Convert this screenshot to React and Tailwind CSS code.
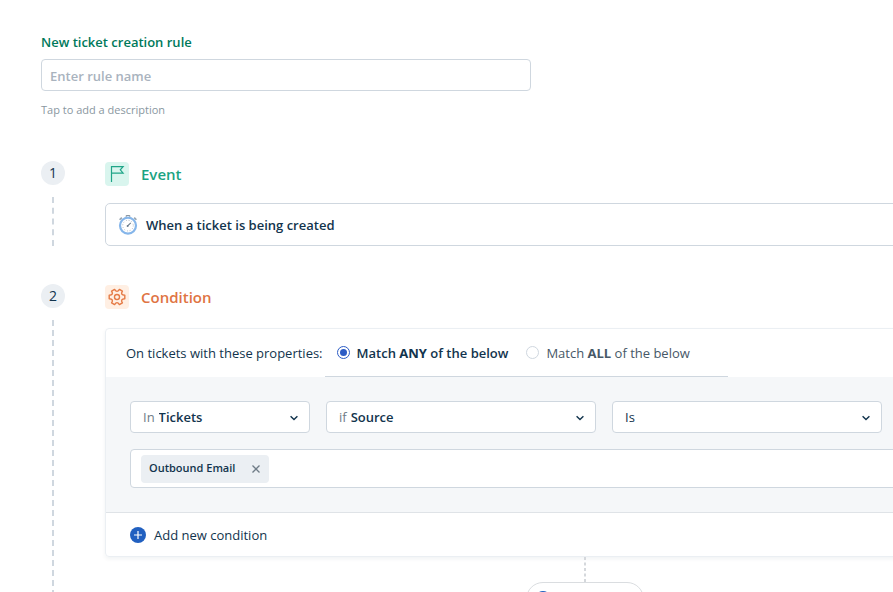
import { useState } from "react";

function Step({ number, title, titleClass, tileClass, icon, children }) {
  return (
    <section className="flex gap-10">
      <div className="flex w-6 shrink-0 flex-col items-center">
        <span className="flex h-6 w-6 items-center justify-center rounded-full bg-[#ebeff3] text-sm text-[#12344d]">
          {number}
        </span>
        <span className="mt-3 flex-1 border-l-2 border-dashed border-[#cfd7df]" />
      </div>
      <div className="min-w-0 flex-1 pt-px">
        <div className="flex h-6 items-center gap-3">
          <span className={`flex h-6 w-6 items-center justify-center rounded ${tileClass}`}>{icon}</span>
          <h2 className={`text-[15px] font-semibold ${titleClass}`}>{title}</h2>
        </div>
        {children}
      </div>
    </section>
  );
}

function FlagIcon() {
  return (
    <svg className="h-6 w-6" viewBox="0 0 24 24" fill="none" stroke="#1fa588" strokeWidth="1.2" aria-hidden="true">
      <path d="M6.5 4v16M6.5 4.6h11.6l-2.8 3.2 2.8 3.3H6.5" />
    </svg>
  );
}

function GearIcon() {
  return (
    <svg className="h-6 w-6" viewBox="-12 -12 24 24" fill="none" stroke="#e57a45" strokeWidth="1.4" strokeLinejoin="round" aria-hidden="true">
      <path d="M7.8-1.7V1.7Q3 1.8 5.4 5.9L2.4 7.6Q0 3.6-2.4 7.6L-5.4 5.9Q-3 1.8-7.8 1.7V-1.7Q-3-1.8-5.4-5.9L-2.4-7.6Q0-3.6 2.4-7.6L5.4-5.9Q3-1.8 7.8-1.7Z" />
      <circle r="2.5" />
    </svg>
  );
}

function StopwatchIcon() {
  return (
    <svg className="h-5 w-5" viewBox="0 0 20 20" fill="none" aria-hidden="true">
      <path d="M8.2.5h3.6v2H8.2z" fill="#fff" stroke="#7d8a96" strokeWidth=".9" />
      <path d="M1.6 4.8 3.8 2.6M18.4 4.8 16.2 2.6" stroke="#98a4af" strokeWidth="1.6" />
      <circle cx="10" cy="10.6" r="8" fill="#fff" stroke="#86b6ea" strokeWidth="2.2" />
      <circle cx="10" cy="10.6" r="5.3" stroke="#9aa6b2" strokeWidth=".9" strokeDasharray=".8 1.98" />
      <path d="M9.4 11.2 12.8 7.8" stroke="#6b7c8c" strokeWidth="1.1" />
      <circle cx="9.6" cy="11" r="1" fill="#6b7c8c" />
    </svg>
  );
}

function PlusIcon() {
  return (
    <svg className="h-4 w-4" viewBox="0 0 16 16" aria-hidden="true">
      <circle cx="8" cy="8" r="8" fill="#2160c0" />
      <path d="M4 8h8M8 4v8" stroke="#fff" strokeWidth="1.2" />
    </svg>
  );
}

function Chevron() {
  return (
    <svg className="pointer-events-none absolute right-2.5 h-2.5 w-2.5" viewBox="0 0 10 10" fill="none" stroke="#12344d" strokeWidth="1.4" aria-hidden="true">
      <path d="M1.6 3.2 5 6.6 8.4 3.2" />
    </svg>
  );
}

function PickList({ id, prefix, label, option, className, selectClass }) {
  return (
    <div className={`relative flex h-8 items-center gap-1 rounded border border-[#cfd7df] bg-white pt-px pl-3 ${className}`}>
      {prefix ? <label htmlFor={id} className="text-[#6f7c87]">{prefix}</label> : null}
      <select
        id={id}
        aria-label={prefix ? undefined : label}
        className={`min-w-0 flex-1 appearance-none bg-transparent text-[#12344d] outline-none ${selectClass}`}
      >
        <option>{option}</option>
      </select>
      <Chevron />
    </div>
  );
}

function MatchOption({ value, current, onChange }) {
  const checked = value === current;

  return (
    <label className={`flex items-center gap-[7px] ${checked ? "font-semibold text-[#12344d]" : "text-[#475867]"}`}>
      <input
        type="radio"
        name="match"
        value={value}
        checked={checked}
        onChange={() => onChange(value)}
        className="h-[13px] w-[13px] appearance-none rounded-full border border-[#cfd7df] bg-white bg-clip-content p-0.5 checked:border-[#2c5cc5] checked:bg-[#2c5cc5]"
      />
      <span className="pt-0.5">
        Match <b className="font-bold">{value}</b> of the below
      </span>
    </label>
  );
}

function App() {
  const [name, setName] = useState("");
  const [match, setMatch] = useState("ANY");
  const [tags, setTags] = useState(["Outbound Email"]);

  return (
    <main className="h-screen overflow-hidden bg-white pt-8 pl-[41px] font-['Open_Sans','Noto_Sans',sans-serif] text-[13px] text-[#12344d]">
      <div className="min-w-[1024px]">
        <header className="w-[490px]">
          <label htmlFor="rule-name" className="block leading-5 font-semibold text-[#00795b]">
            New ticket creation rule
          </label>
          <input
            id="rule-name"
            value={name}
            onChange={(event) => setName(event.target.value)}
            placeholder="Enter rule name"
            className="mt-[7px] block h-8 w-full rounded border border-[#cfd7df] px-2 pt-0.5 font-semibold outline-none placeholder:text-[#a9b3be]"
          />
          <button type="button" className="mt-2.5 block text-[11px] leading-[18px] text-[#8a979f]">
            Tap to add a description
          </button>
        </header>

        <div className="mt-[42px] flex flex-col gap-[38px]">
          <Step number="1" title="Event" titleClass="text-[#1aa382]" tileClass="bg-[#d9f5ee]" icon={<FlagIcon />}>
            <div className="mt-[17px] flex h-[43px] items-center gap-2 rounded-[5px] border border-[#cfd7df] pl-3 font-semibold">
              <StopwatchIcon />
              <span className="pt-0.5">When a ticket is being created</span>
            </div>
          </Step>

          <Step number="2" title="Condition" titleClass="text-[#e07443]" tileClass="bg-[#ffefe3]" icon={<GearIcon />}>
            <div className="mt-[19px] rounded border border-[#ebeff3] shadow-[0_2px_4px_rgba(24,50,71,0.06)]">
              <div className="flex h-12 items-stretch pl-5">
                <span className="flex items-center pt-0.5 pr-0.5">On tickets with these properties:</span>
                <div className="flex items-center gap-[18px] border-b border-[#cfd7df] pr-[38px] pl-3">
                  <MatchOption value="ANY" current={match} onChange={setMatch} />
                  <MatchOption value="ALL" current={match} onChange={setMatch} />
                </div>
              </div>

              <div className="border-b border-[#dfe3e7] bg-[#f5f7f9] p-6">
                <div className="flex gap-4">
                  <PickList id="module" prefix="In" option="Tickets" className="w-[180px]" selectClass="font-semibold" />
                  <PickList id="field" prefix="if" option="Source" className="w-[270px]" selectClass="font-semibold" />
                  <PickList id="operator" label="Operator" option="Is" className="w-[270px]" selectClass="" />
                </div>
                <div className="mt-4 flex h-[39px] items-center gap-2 rounded border border-[#cfd7df] bg-white pl-2.5">
                  {tags.map((tag) => (
                    <span key={tag} className="flex h-7 items-center gap-4 rounded bg-[#ebeff3] px-2 text-[11px] font-semibold">
                      {tag}
                      <button type="button" aria-label={`Remove ${tag}`} onClick={() => setTags(tags.filter((item) => item !== tag))}>
                        <svg className="h-2.5 w-2.5" viewBox="0 0 10 10" stroke="#6f7c87" strokeWidth="1.3" aria-hidden="true">
                          <path d="M1.5 1.5l7 7M8.5 1.5l-7 7" />
                        </svg>
                      </button>
                    </span>
                  ))}
                </div>
              </div>

              <button type="button" className="flex h-[43px] items-center gap-2 pl-6">
                <PlusIcon />
                <span className="pt-0.5">Add new condition</span>
              </button>
            </div>

            <div className="flex flex-col items-center">
              <span className="h-[25px] border-x border-dashed border-[#d5d8dc]" />
              <button
                type="button"
                aria-label="Add condition set"
                className="flex h-[34px] w-[118px] items-center rounded-full border border-[#dadde0] bg-white pl-2"
              >
                <PlusIcon />
              </button>
            </div>
          </Step>
        </div>
      </div>
    </main>
  );
}

export default App;
